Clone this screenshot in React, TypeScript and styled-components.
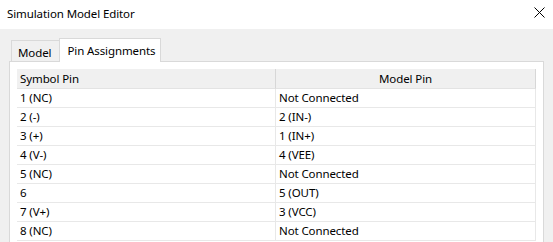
import React from 'react';
import styled, { createGlobalStyle } from 'styled-components';

const GlobalStyle = createGlobalStyle`
  html, body {
    margin: 0;
    padding: 0;
    background: #f0f0f0;
    overflow: hidden;
  }
  body {
    font-family: "Noto Sans", "Open Sans", sans-serif;
    font-size: 11.5px;
    letter-spacing: -0.1px;
    color: #000;
  }
`

const Window = styled.div`
  width: 553px;
  height: 242px;
  overflow: hidden;
  background: #f0f0f0;
`

const TitleBar = styled.div`
  height: 29px;
  background: #fff;
  display: flex;
  align-items: center;
  justify-content: space-between;
  padding-left: 7px;
  box-sizing: border-box;
`

const Title = styled.span`
  margin-top: -3px;
`

const CloseButton = styled.div`
  width: 28px;
  height: 29px;
  display: flex;
  align-items: center;
  justify-content: center;
  margin-top: -5px;
`

const Body = styled.div`
  padding: 9px 9px 0 9px;
`

const TabStrip = styled.div`
  display: flex;
  align-items: flex-end;
  padding-left: 2px;
  height: 23px;
`

const Tab = styled.div<{ $active?: boolean }>`
  box-sizing: border-box;
  border: 1px solid #d9d9d9;
  border-bottom: none;
  display: flex;
  align-items: center;
  height: ${p => (p.$active ? '24px' : '21px')};
  background: ${p => (p.$active ? '#fff' : '#f0f0f0')};
  margin-left: ${p => (p.$active ? '-1px' : '0')};
  margin-bottom: ${p => (p.$active ? '-1px' : '0')};
  position: relative;
  z-index: ${p => (p.$active ? 2 : 1)};
  padding-top: ${p => (p.$active ? '0' : '2px')};
  padding-left: ${p => (p.$active ? '7px' : '6px')};
  padding-right: ${p => (p.$active ? '5px' : '8px')};
`

const TabPage = styled.div`
  box-sizing: border-box;
  background: #fff;
  border: 1px solid #d9d9d9;
  height: 200px;
  padding: 7px 6px 0 7px;
`

const Grid = styled.div`
  display: grid;
  grid-template-columns: 259px 260px;
`

const HeaderCell = styled.div<{ $center?: boolean }>`
  height: 20px;
  box-sizing: border-box;
  background: #f0f0f0;
  border-right: 1px solid #d7d7d7;
  border-bottom: 1px solid #e3e3e3;
  display: flex;
  align-items: center;
  justify-content: ${p => (p.$center ? 'center' : 'flex-start')};
  padding-left: ${p => (p.$center ? '0' : '3px')};
`

const Cell = styled.div`
  height: 19px;
  box-sizing: border-box;
  border-right: 1px solid #e8e8e8;
  border-bottom: 1px solid #e8e8e8;
  display: flex;
  align-items: center;
  padding-left: 3px;
  padding-bottom: 1px;
  white-space: nowrap;
`

const pins: [string, string][] = [
  ['1 (NC)', 'Not Connected'],
  ['2 (-)', '2 (IN-)'],
  ['3 (+)', '1 (IN+)'],
  ['4 (V-)', '4 (VEE)'],
  ['5 (NC)', 'Not Connected'],
  ['6', '5 (OUT)'],
  ['7 (V+)', '3 (VCC)'],
  ['8 (NC)', 'Not Connected'],
];

const App = () => {
  return (
    <Window>
      <GlobalStyle />
      <TitleBar>
        <Title>Simulation Model Editor</Title>
        <CloseButton>
          <svg width="11" height="11" viewBox="0 0 11 11">
            <path d="M0.5 0.5 L10.5 10.5 M10.5 0.5 L0.5 10.5" stroke="#000" strokeWidth="1" />
          </svg>
        </CloseButton>
      </TitleBar>
      <Body>
        <TabStrip>
          <Tab>Model</Tab>
          <Tab $active>Pin Assignments</Tab>
        </TabStrip>
        <TabPage>
          <Grid>
            <HeaderCell>Symbol Pin</HeaderCell>
            <HeaderCell $center>Model Pin</HeaderCell>
            {pins.map(([symbol, model]) => (
              <React.Fragment key={symbol}>
                <Cell>{symbol}</Cell>
                <Cell>{model}</Cell>
              </React.Fragment>
            ))}
          </Grid>
        </TabPage>
      </Body>
    </Window>
  );
};

export default App;
